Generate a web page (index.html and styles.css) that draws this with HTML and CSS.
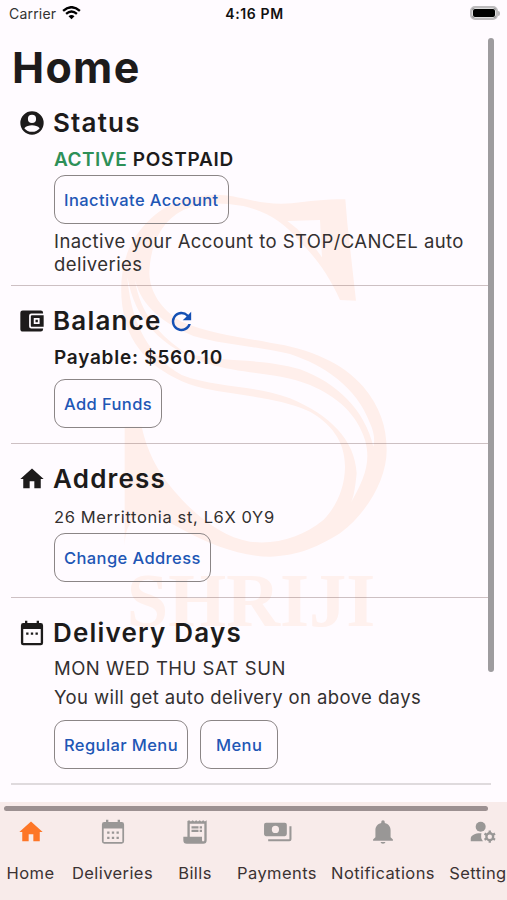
FILE: index.html
```html
<!DOCTYPE html>
<html lang="en">
<head>
<meta charset="utf-8">
<title>Home</title>
<link rel="stylesheet" href="styles.css">
</head>
<body>
<div class="app">
  <svg class="watermark" viewBox="0 0 870 1380" aria-hidden="true">
    <path d="M330 45C400 48 450 78 545 70C600 63 640 58 706 58L712 130L738 362L690 360C650 270 600 215 570 185C520 125 470 95 400 78C320 66 270 68 220 90C150 125 120 200 118 280C120 350 170 400 215 425C300 460 380 470 480 488C600 505 700 550 760 620C810 680 830 740 830 810C830 900 770 1000 690 1060C610 1110 550 1128 480 1130C400 1130 300 1095 220 1050C150 1010 100 990 75 1015C50 1040 45 1060 44 1100V740H95C110 810 140 870 190 930C250 1000 330 1070 420 1085C500 1095 580 1070 640 1020C680 980 705 920 705 860C705 780 660 730 600 695C500 650 400 650 280 625C160 595 70 520 45 420C25 340 30 250 70 180C120 100 200 40 330 45Z"/>
    <path class="cut" d="M532 123L630 120L636 232Q590 165 532 123Z"/>
    <path class="cut" d="M52 290C60 400 100 520 215 585C320 625 420 612 540 655C660 705 735 780 740 880C735 930 730 955 722 970C760 900 785 850 765 780C740 700 680 650 600 615C500 575 400 585 290 550C150 500 75 420 52 290Z"/>
    <path class="cut" d="M75 300C90 400 150 470 230 520C340 550 450 532 570 568C680 608 765 690 790 800Q798 770 780 730C740 620 640 555 540 522C440 498 340 495 250 468C160 430 95 380 75 300Z"/>
    <text x="50" y="1338" textLength="746" lengthAdjust="spacingAndGlyphs">SHRIJI</text>
  </svg>

  <header class="statusbar">
    <div class="carrier">Carrier
      <svg class="wifi" viewBox="0 0 20 15"><path d="M1 5.2Q10-2.7 19 5.2M4.2 8.4Q10 3.4 15.8 8.4"/><path class="dot" d="M6.8 11Q10 8.2 13.2 11L10 14.3Z"/></svg>
    </div>
    <div class="time">4:16 PM</div>
    <div class="battery"><i></i></div>
  </header>

  <main class="content">
    <h1>Home</h1>

    <section class="status">
      <h2><svg class="icon" viewBox="0 0 24 24"><path d="M12 2a10 10 0 1 0 0 20 10 10 0 0 0 0-20zm0 3a3.5 3.5 0 1 1 0 7 3.5 3.5 0 0 1 0-7zm0 14.500c-2.700 0-5-1.100-6.600-3.100C7 14.900 9.500 14 12 14s5 .9 6.600 2.400c-1.600 2-3.900 3.100-6.600 3.100z"/></svg><span>Status</span></h2>
      <div class="body">
        <p class="strong state"><b>ACTIVE</b> POSTPAID</p>
        <button>Inactivate Account</button>
        <p class="note">Inactive your Account to STOP/CANCEL auto deliveries</p>
      </div>
    </section>

    <section class="balance">
      <h2><svg class="icon" viewBox="0 0 24 24"><path fill-rule="evenodd" d="M9.500 16.500v-9a2 2 0 0 1 2-2h10V5a2 2 0 0 0-2-2H4a2 2 0 0 0-2 2v14c0 1.100.9 2 2 2h15.500a2 2 0 0 0 2-2v-.5h-10a2 2 0 0 1-2-2zM12 7a1 1 0 0 0-1 1v8a1 1 0 0 0 1 1h10V7zm1.500 2.500h5v5h-5zM15 11h2v2h-2z"/></svg><span>Balance</span><svg class="refresh" viewBox="0 0 24 24"><path d="M17.650 6.350A8 8 0 1 0 19.730 14h-2.080A6 6 0 1 1 12 6c1.660 0 3.140.69 4.220 1.780L13 11h7V4z"/></svg></h2>
      <div class="body">
        <p class="strong payable">Payable: $560.10</p>
        <button>Add Funds</button>
      </div>
    </section>

    <section class="address">
      <h2><svg class="icon" viewBox="0 0 24 24"><path d="M10 20v-6h4v6h5.500v-8H22L12 3 2 12h2.500v8z"/></svg><span>Address</span></h2>
      <div class="body">
        <p class="street">26 Merrittonia st, L6X 0Y9</p>
        <button>Change Address</button>
      </div>
    </section>

    <section class="delivery">
      <h2><svg class="icon" viewBox="0 0 24 24"><path fill-rule="evenodd" d="M19.500 3.500H18V1.500h-2v2H8v-2H6v2H4.500a2 2 0 0 0-2 2v15a2 2 0 0 0 2 2h15a2 2 0 0 0 2-2v-15a2 2 0 0 0-2-2zm0 17h-15v-12h15zM7 11.500h2v2H7zm4 0h2v2h-2zm4 0h2v2h-2z"/></svg><span>Delivery Days</span></h2>
      <div class="body">
        <p class="days">MON WED THU SAT SUN</p>
        <p class="info">You will get auto delivery on above days</p>
        <div class="actions"><button>Regular Menu</button><button>Menu</button></div>
      </div>
    </section>
  </main>
  <div class="scroll-y"></div>

  <nav class="tabs">
    <div class="scroll-x"></div>
    <a class="tab home"><svg viewBox="0 0 24 24"><path d="M10 20v-6h4v6h5.500v-8H22L12 3 2 12h2.500v8z"/></svg><span>Home</span></a>
    <a class="tab deliveries"><svg viewBox="0 0 24 24"><path fill-rule="evenodd" d="M19.500 3.500H18v-2h-2v2H8v-2H6v2H4.500a2 2 0 0 0-2 2v14.500a2 2 0 0 0 2 2h15a2 2 0 0 0 2-2V5.500a2 2 0 0 0-2-2zm.5 17H4V9h16zM7 11.500h2v2H7zm4 0h2v2h-2zm4 0h2v2h-2zM7 16h2v2H7zm4 0h2v2h-2zm4 0h2v2h-2z"/></svg><span>Deliveries</span></a>
    <a class="tab bills"><svg viewBox="0 0 24 24"><path fill-rule="evenodd" d="M22 2l-1.500 1L19 2l-1.500 1L16 2l-1.500 1L13 2l-1.500 1L10 2 8.500 3 7 2 5.500 2.500V16H2v3a3 3 0 0 0 3 3h14a3 3 0 0 0 3-3zm-2 17a1 1 0 0 1-2 0v-3H7.500V5H20zM9 7h6v2H9zm7 0h2v2h-2zM9 10h6v2H9zm7 0h2v2h-2z"/></svg><span>Bills</span></a>
    <a class="tab payments"><svg class="wide" viewBox="0 0 28 24"><path fill-rule="evenodd" d="M23 14V5a2 2 0 0 0-2-2H3a2 2 0 0 0-2 2v9c0 1.100.9 2 2 2h18a2 2 0 0 0 2-2zm-11-1a3.500 3.500 0 1 1 0-7 3.500 3.500 0 0 1 0 7zM27.500 6.500V19a2 2 0 0 1-2 2H5v-2h20.500V6.500z"/></svg><span>Payments</span></a>
    <a class="tab notifications"><svg viewBox="0 0 24 24"><path d="M12 22c1.100 0 2-.6 2-1.500h-4c0 .9.9 1.500 2 1.500zm6.500-5.500v-6c0-3.070-1.640-5.640-5-6.320V3.500a1.500 1.500 0 0 0-3 0v.68c-3.370.68-5 3.240-5 6.320v6l-2 2v1h17v-1z"/></svg><span>Notifications</span></a>
    <a class="tab settings"><svg viewBox="0 0 24 24"><circle cx="10" cy="7.500" r="4.300"/><path d="M10.700 13C6 12.700 1.500 14.500 1.500 17.500V20H12a8 8 0 0 1-1.300-7z"/><circle class="gear" cx="17.800" cy="16" r="2.900"/><path class="teeth" d="M17.800 10.800v2.400m0 5.600v2.400m-4.500-7.800 2.100 1.200m4.800 2.800 2.100 1.200m0-5.200-2.100 1.200m-4.800 2.800-2.100 1.200"/></svg><span>Settings</span></a>
  </nav>
</div>
</body>
</html>
```
FILE: styles.css
```css
* { box-sizing: border-box; }
body { margin: 0; background: #fffbff; color: #1d1b1b; font-family: Inter, sans-serif; }
h1, h2, p { margin: 0; }
.app { position: relative; width: 507px; height: 900px; overflow: hidden; display: flex; flex-direction: column; }
.watermark { position: absolute; left: 110px; top: 180px; width: 290px; height: 460px; fill: #ffefeb; overflow: visible; }
.watermark .cut { fill: #fffbff; }
.watermark text { font: bold 229px "Liberation Serif", serif; fill: #fff1ee; }

.statusbar { position: relative; height: 28px; display: flex; justify-content: space-between; align-items: center; padding: 0 7px 2px 9px; font-size: 14px; flex: none; }
.carrier { display: flex; align-items: center; gap: 6px; width: 190px; letter-spacing: .2px; color: #333; }
.wifi { width: 19px; height: 14px; fill: none; stroke: #000; stroke-width: 2.500; }
.wifi .dot { fill: #000; stroke: none; }
.time { font-weight: 600; color: #111; letter-spacing: .6px; }
.battery { width: 190px; display: flex; justify-content: flex-end; align-items: center; }
.battery i { width: 28px; height: 14px; border: 2px solid #bdbbbd; border-radius: 5px; background: #000; box-shadow: inset 0 0 0 1px #ddd; }
.battery::after { content: ""; width: 2px; height: 5px; background: #b9b7b9; border-radius: 0 2px 2px 0; }

.content { position: relative; flex: 1; padding: 0 16px 0 11px; }
h1 { height: 78px; padding-left: 1px; line-height: 79px; font-size: 43px; font-weight: 700; letter-spacing: 1.3px; }
section { border-bottom: 1px solid rgba(90, 55, 55, .3); }
.status { height: 180px; }
.balance { height: 158px; padding-top: 18px; }
.address { height: 154px; padding-top: 18px; }
.delivery { height: 187px; padding-top: 18px; border-bottom: 2px solid #dfdadd; }
h2 { height: 34px; padding-left: 7px; display: flex; align-items: center; font-size: 26px; font-weight: 600; letter-spacing: 1.200px; }
h2 span { margin-left: 7px; line-height: 32px; padding-bottom: 1px; white-space: nowrap; }
.icon { width: 28px; height: 28px; fill: #1d1b1b; flex: none; }
.refresh { width: 29px; height: 29px; margin-left: 5px; fill: #1450b4; }
.body { padding-left: 43px; font-size: 18.500px; color: #333030; }
.strong { font-size: 19px; letter-spacing: .75px; font-weight: 600; color: #1d1b1b; }
.strong b { font-weight: 600; color: #2e9058; letter-spacing: .5px; }
.state { height: 35px; line-height: 39px; }
.note { line-height: 23px; margin-top: 6px; letter-spacing: .43px; }
.payable { height: 41px; line-height: 39px; }
.street { height: 37px; line-height: 42px; font-size: 16.500px; letter-spacing: .63px; }
.days { height: 30px; line-height: 37px; letter-spacing: .5px; }
.info { height: 40px; line-height: 35px; letter-spacing: .4px; }
.actions { display: flex; gap: 12px; }
button { display: block; height: 49px; margin: 0; padding: 0 9px; border: 1px solid #8b8586; border-radius: 11px; background: transparent; color: #2156b5; font: 500 16.500px Inter, sans-serif; letter-spacing: .4px; white-space: nowrap; }
.actions button:last-child { padding: 0 15px; }
.scroll-y { position: absolute; right: 13px; top: 38px; width: 6px; height: 634px; border-radius: 3px; background: #9e9c9f; }

.tabs { position: relative; display: flex; height: 98px; flex: none; background: #f8ebea; padding-top: 16px; }
.scroll-x { position: absolute; left: 4px; top: 4px; width: 484px; height: 5px; border-radius: 3px; background: #9c9091; }
.tab { flex: none; display: flex; flex-direction: column; align-items: center; font-size: 16.500px; color: #3b3232; letter-spacing: .42px; }
.tab svg { width: 28px; height: 28px; fill: #999796; }
.tab .wide { width: 29px; }
.tab span { margin-top: 17px; line-height: 21px; white-space: nowrap; }
.tab.home { width: 61px; }
.tab.home svg { fill: #fd7627; }
.tab.deliveries { width: 103px; }
.tab.bills { width: 62px; }
.tab.payments { width: 102px; }
.tab.notifications { width: 110px; }
.tab.settings { width: 89px; }
.tab .gear { fill: none; stroke: #999796; stroke-width: 2; }
.tab .teeth { fill: none; stroke: #999796; stroke-width: 2; }
```
